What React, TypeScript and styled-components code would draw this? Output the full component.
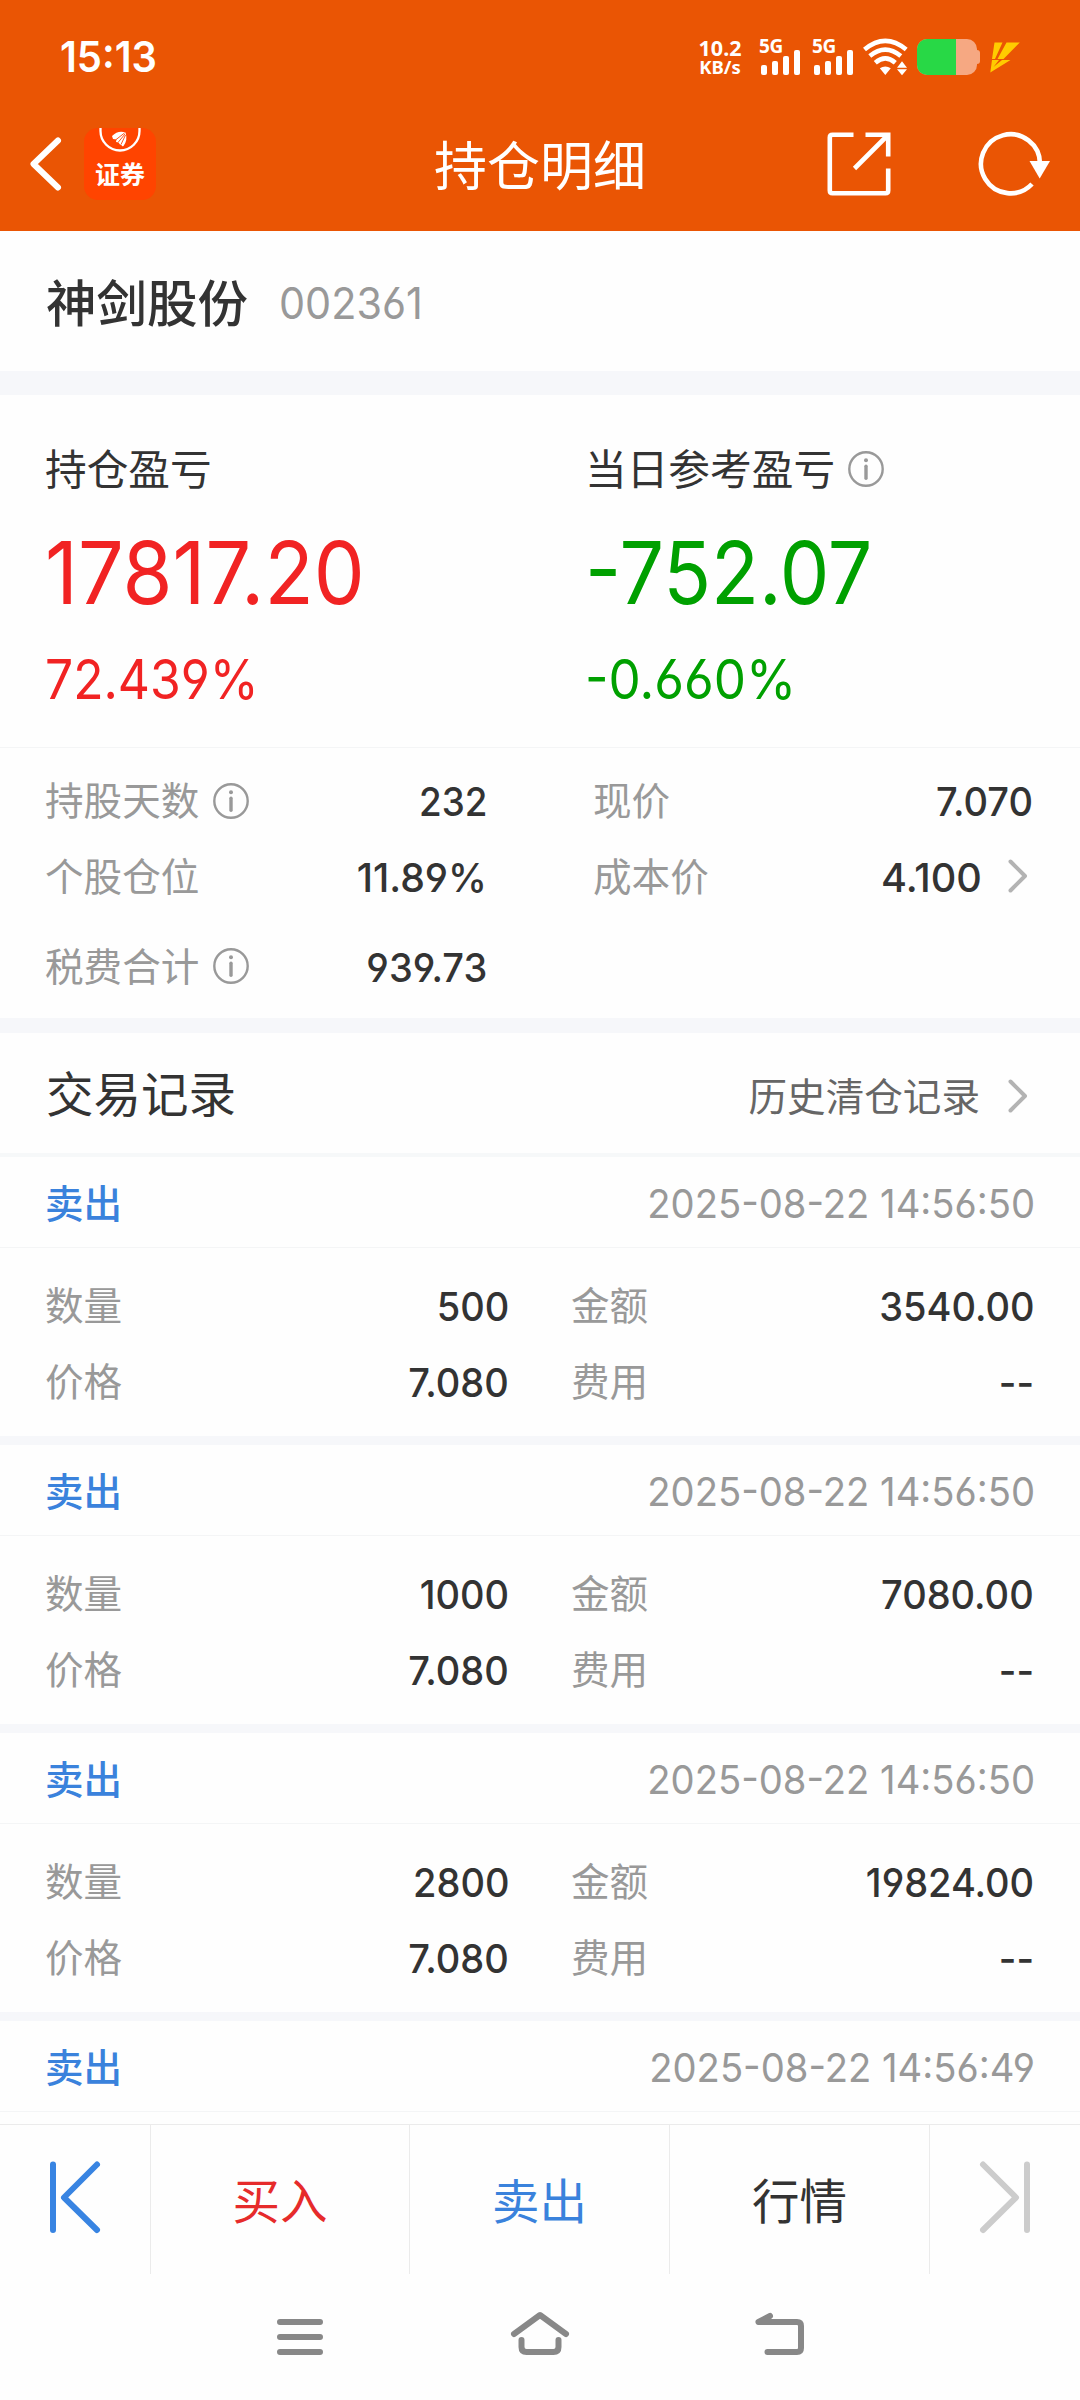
import React from 'react';
import styled, { createGlobalStyle } from 'styled-components';

const cjk = '"Noto Sans CJK SC", "Noto Sans", sans-serif';
const latin = 'Inter, "Noto Sans CJK SC", sans-serif';

const color = {
  brand: '#ea5504',
  text: '#333333',
  sub: '#666666',
  muted: '#999999',
  band: '#f6f7fa',
  rule: '#f4f5f6',
  red: '#f12323',
  green: '#00a000',
  blue: '#3a82dc',
};

const GlobalStyle = createGlobalStyle`
  * { box-sizing: border-box; }
  body { margin: 0; background: #fefefe; }
`;

const Screen = styled.div`
  display: flex;
  flex-direction: column;
  width: 1080px;
  height: 2400px;
  overflow: hidden;
  background: #fefefe;
  color: ${color.text};
  font-family: ${cjk};
`;

/* Latin digits, set slightly condensed from one edge */
const Num = styled.span<{ $size?: number; $weight?: number; $color?: string; $x?: number; $origin?: string }>`
  display: inline-block;
  font-family: ${latin};
  font-size: ${(p) => p.$size ?? 40}px;
  font-weight: ${(p) => p.$weight ?? 500};
  font-feature-settings: 'cv03', 'cv04';
  line-height: 1;
  white-space: nowrap;
  color: ${(p) => p.$color ?? color.text};
  transform: scaleX(${(p) => p.$x ?? 0.95});
  transform-origin: ${(p) => p.$origin ?? 'right'} center;
`;

const Han = styled.span<{ $size?: number; $weight?: number; $color?: string; $lift?: number }>`
  font-size: ${(p) => p.$size ?? 38.6}px;
  font-weight: ${(p) => p.$weight ?? 400};
  line-height: 1;
  padding-bottom: ${(p) => p.$lift ?? 0.17}em;
  color: ${(p) => p.$color ?? color.muted};
  white-space: nowrap;
`;

const Header = styled.header`
  height: 231px;
  flex: none;
  background: ${color.brand};
  color: #fff;
`;

const StatusBar = styled.div`
  display: flex;
  align-items: center;
  justify-content: space-between;
  height: 114px;
  padding: 0 60px 0 60px;
`;

const StatusIcons = styled.div`
  display: flex;
  align-items: center;
`;

const NetSpeed = styled.div`
  display: flex;
  flex-direction: column;
  align-items: center;
  width: 44px;
  margin-right: 17px;
  font-family: 'Noto Sans', sans-serif;
  font-weight: 700;
  font-size: 21.5px;
  line-height: 20px;
  small {
    font-size: 18.5px;
    line-height: 18px;
  }
`;

const Signal = styled.div`
  display: flex;
  flex-direction: column;
  width: 42px;
  height: 37px;
  margin-right: 11px;
`;

const SignalLabel = styled.span`
  height: 13px;
  font: 700 19px/14px 'Noto Sans', sans-serif;
  letter-spacing: -0.3px;
`;

const SignalBars = styled.div`
  display: flex;
  align-items: flex-end;
  gap: 5px;
  height: 25px;
  margin: -2px 0 0 2px;
`;

const Bar = styled.i<{ $h: number }>`
  width: 6px;
  height: ${(p) => p.$h}px;
  border-radius: 2px;
  background: #fff;
`;

const TitleBar = styled.div`
  display: grid;
  grid-template-columns: 1fr auto 1fr;
  align-items: center;
  height: 99px;
  padding: 0 29px 0 29px;
`;

const TitleLeft = styled.div`
  display: flex;
  align-items: center;
  gap: 21px;
`;

const TitleRight = styled.div`
  display: flex;
  align-items: center;
  justify-content: flex-end;
  gap: 86px;
`;

const Logo = styled.div`
  display: flex;
  flex-direction: column;
  align-items: center;
  width: 72px;
  height: 72px;
  border-radius: 14px;
  background: #ff4400;
`;

const LogoText = styled.span`
  font-size: 25px;
  font-weight: 700;
  line-height: 25px;
  margin-top: 6px;
`;

const StockRow = styled.section`
  display: flex;
  align-items: center;
  gap: 31px;
  height: 140px;
  flex: none;
  padding: 4px 46px 0;
`;

const Band = styled.div<{ $h: number }>`
  height: ${(p) => p.$h}px;
  flex: none;
  background: ${color.band};
`;

const Summary = styled.section`
  display: grid;
  grid-template-columns: 540px 540px;
  height: 353px;
  flex: none;
  padding-top: 49px;
  border-bottom: 1px solid ${color.rule};
`;

const SummaryCol = styled.div`
  display: flex;
  flex-direction: column;
  padding-left: 45px;
`;

const Line = styled.div<{ $h: number }>`
  display: flex;
  align-items: center;
  gap: 13px;
  height: ${(p) => p.$h}px;
  > svg {
    margin-bottom: 2px;
  }
`;

const Stats = styled.section`
  display: grid;
  grid-template-columns: 442px 440px;
  column-gap: 106px;
  grid-template-rows: 76px 75px 105px;
  height: 270px;
  flex: none;
  padding: 16px 46px 0 45px;
`;

const Stat = styled.div`
  display: flex;
  align-items: center;
  gap: 14px;
  > svg {
    margin-bottom: 3px;
  }
  > :last-child {
    margin-left: auto;
  }
`;

const StatValue = styled.span`
  display: flex;
  align-items: center;
  gap: 26px;
  padding-right: 5px;
  > svg {
    margin-bottom: 4px;
  }
`;

const TradeHeader = styled.section`
  display: flex;
  align-items: center;
  justify-content: space-between;
  height: 124px;
  flex: none;
  padding: 5px 52px 0 46px;
  border-bottom: 4px solid #f6f8f9;
`;

const TradeLink = styled.div`
  display: flex;
  align-items: center;
  gap: 28px;
`;

const Records = styled.section`
  flex: 1;
  min-height: 0;
  overflow: hidden;
`;

const RecordHead = styled.div`
  display: flex;
  align-items: center;
  justify-content: space-between;
  height: 91px;
  padding: 3px 45px 0;
  border-bottom: 1px solid ${color.rule};
`;

const RecordBody = styled.div`
  display: grid;
  grid-template-columns: 464px 463px;
  column-gap: 62px;
  grid-template-rows: 76px 76px;
  height: 188px;
  padding: 20.5px 45px 0;
`;

const TabBar = styled.nav`
  display: grid;
  grid-template-columns: 151px 259px 260px 260px 150px;
  height: 150px;
  flex: none;
  border-top: 1px solid #ebebeb;
`;

const Tab = styled.div`
  display: flex;
  align-items: center;
  justify-content: center;
  padding-top: 1px;
  &:not(:last-child) {
    border-right: 1px solid #ebebeb;
  }
`;

const NavBar = styled.footer`
  display: flex;
  justify-content: center;
  align-items: center;
  gap: 180px;
  height: 126px;
  flex: none;
`;

const InfoIcon = () => (
  <svg width="36" height="36" viewBox="0 0 36 36" fill="none" stroke={color.muted}>
    <circle cx="18" cy="18" r="16.7" strokeWidth="2.4" />
    <path d="M18 15.2v12" strokeWidth="3.4" strokeLinecap="round" />
    <circle cx="18" cy="9.3" r="2" fill={color.muted} stroke="none" />
  </svg>
);

const Chevron = () => (
  <svg width="20" height="34" viewBox="0 0 20 34" fill="none">
    <path d="M2.5 2.5 17 17 2.5 31.5" stroke="#b3b3b3" strokeWidth="4" strokeLinecap="round" strokeLinejoin="round" />
  </svg>
);

const SignalIcon = () => (
  <Signal>
    <SignalLabel>5G</SignalLabel>
    <SignalBars>
      {[10, 14, 19, 25].map((h) => (
        <Bar key={h} $h={h} />
      ))}
    </SignalBars>
  </Signal>
);

const WifiSvg = styled.svg`
  margin: 0 8px 0 -2px;
`;

const Wifi = () => (
  <WifiSvg width="46" height="38" viewBox="0 0 46 38" fill="none">
    <g stroke="#fff" strokeWidth="4.6">
      <path d="M1.5 11.5Q22.3-5.8 43.2 11.5" />
      <path d="M6.8 18Q22.3 5.2 37.8 18" />
      <path d="M12.3 24.8Q22.3 16 32.3 24.8" />
    </g>
    <path d="M16.8 30.3Q22.3 26.8 27.8 30.3L22.3 37ZM39 23.3l5 6.5H34ZM39 37.2l5-6H34Z" fill="#fff" />
  </WifiSvg>
);

const BatterySvg = styled.svg`
  margin-right: 9px;
`;

const Battery = () => (
  <BatterySvg width="64" height="36" viewBox="0 0 64 36">
    <rect x="0" y="0" width="60" height="36" rx="10" fill="#f6a882" />
    <path d="M60 11q3 0 3 3v8q0 3-3 3Z" fill="#f6a882" />
    <path d="M39 0H10A10 10 0 0 0 0 10v16a10 10 0 0 0 10 10h29Z" fill="#28d846" />
  </BatterySvg>
);

const Bolt = () => (
  <svg width="30" height="31" viewBox="0 0 30 31" fill="#ffcc00">
    <path d="M4.500 .5H12.500L5 17H2ZM16.500 .5H29.800L13.500 17H7.500ZM2 18H9L3.500 25 12 18H20.500L.3 30.500Z" />
  </svg>
);

interface Trade {
  qty: string;
  amount: string;
  time: string;
}

const trades: Trade[] = [
  { qty: '500', amount: '3540.00', time: '2025-08-22 14:56:50' },
  { qty: '1000', amount: '7080.00', time: '2025-08-22 14:56:50' },
  { qty: '2800', amount: '19824.00', time: '2025-08-22 14:56:50' },
];

const RecordTop = ({ time }: { time: string }) => (
  <RecordHead>
    <Han $color={color.blue} $weight={500} $lift={0.12}>卖出</Han>
    <Num $color={color.muted} $weight={400} $x={0.955}>{time}</Num>
  </RecordHead>
);

const Field = ({ label, value }: { label: string; value: string }) => (
  <Stat>
    <Han>{label}</Han>
    <Num>{value}</Num>
  </Stat>
);

export default function App() {
  return (
    <Screen>
      <GlobalStyle />
      <Header>
        <StatusBar>
          <Num $size={42} $weight={600} $color="#fff" $origin="left">15:13</Num>
          <StatusIcons>
            <NetSpeed>
              <span>10.2</span>
              <small>KB/s</small>
            </NetSpeed>
            <SignalIcon />
            <SignalIcon />
            <Wifi />
            <Battery />
            <Bolt />
          </StatusIcons>
        </StatusBar>
        <TitleBar>
          <TitleLeft>
            <svg width="34" height="56" viewBox="0 0 34 56" fill="none">
              <path d="M29 4.500 4.500 28 29 51.500" stroke="#fff" strokeWidth="6" strokeLinecap="round" strokeLinejoin="round" />
            </svg>
            <Logo>
              <svg width="44" height="27" viewBox="0 0 44 27">
                <path d="M2.5 0v3a19.5 19.5 0 0 0 39 0V0" stroke="#fff" strokeWidth="2.3" fill="none" />
                <path d="M14 8Q20 2 27.500 4.500Q30 12 25.500 18Q24 19 23.500 17L22 16.500 20.500 14.500 18 14 18.500 11.500 15 11Z" fill="#fff" />
                <path d="M26.500 5 17.500 12M27 6 20 14.500M27.500 7 23 16.500" stroke="#ff4400" strokeWidth=".9" />
              </svg>
              <LogoText>证券</LogoText>
            </Logo>
          </TitleLeft>
          <Han $size={53} $color="#fff" $lift={0.01}>持仓明细</Han>
          <TitleRight>
            <svg width="64" height="64" viewBox="0 0 64 64" fill="none" stroke="#fff" strokeWidth="4.6">
              <path d="M26.500 2.800H5.500Q2.800 2.800 2.800 5.500V58.500Q2.800 61.200 5.500 61.200H58.500Q61.200 61.200 61.200 58.500V36.500" />
              <path d="M38.500 2.800H61.200V24.500M61 3 27.500 36.500" />
            </svg>
            <svg width="74" height="66" viewBox="0 0 74 66" fill="none">
              <path d="M63 33A29.500 29.500 0 1 0 55 53" stroke="#fff" strokeWidth="4.600" />
              <path d="M52.500 30H73L62.700 47.500Z" fill="#fff" />
            </svg>
          </TitleRight>
        </TitleBar>
      </Header>

      <StockRow>
        <Han $size={50.500} $weight={500} $color={color.text} $lift={0.11}>神剑股份</Han>
        <Num $size={44} $weight={400} $color={color.muted} $x={0.94} $origin="left">002361</Num>
      </StockRow>
      <Band $h={24} />

      <Summary>
        <SummaryCol>
          <Line $h={52}>
            <Han $size={41.700} $color={color.text} $lift={0.08}>持仓盈亏</Han>
          </Line>
          <Line $h={154}>
            <Num $size={86.500} $weight={400} $color={color.red} $x={0.935} $origin="left">17817.20</Num>
          </Line>
          <Line $h={58}>
            <Num $size={55} $weight={400} $color={color.red} $x={0.905} $origin="left">72.439%</Num>
          </Line>
        </SummaryCol>
        <SummaryCol>
          <Line $h={52}>
            <Han $size={41.700} $color={color.text} $lift={0.08}>当日参考盈亏</Han>
            <InfoIcon />
          </Line>
          <Line $h={154}>
            <Num $size={86.500} $weight={400} $color={color.green} $x={0.91} $origin="left">-752.07</Num>
          </Line>
          <Line $h={58}>
            <Num $size={55} $weight={400} $color={color.green} $x={0.93} $origin="left">-0.660%</Num>
          </Line>
        </SummaryCol>
      </Summary>

      <Stats>
        <Stat>
          <Han>持股天数</Han>
          <InfoIcon />
          <Num $x={0.92}>232</Num>
        </Stat>
        <Field label="现价" value="7.070" />
        <Stat>
          <Han>个股仓位</Han>
          <Num $x={0.98}>11.89%</Num>
        </Stat>
        <Stat>
          <Han>成本价</Han>
          <StatValue>
            <Num $x={0.99}>4.100</Num>
            <Chevron />
          </StatValue>
        </Stat>
        <Stat>
          <Han>税费合计</Han>
          <InfoIcon />
          <Num>939.73</Num>
        </Stat>
      </Stats>
      <Band $h={15} />

      <TradeHeader>
        <Han $size={47.500} $color={color.text} $lift={0.14}>交易记录</Han>
        <TradeLink>
          <Han $color={color.sub} $lift={0.06}>历史清仓记录</Han>
          <Chevron />
        </TradeLink>
      </TradeHeader>

      <Records>
        {trades.map((t) => (
          <React.Fragment key={t.amount}>
            <RecordTop time={t.time} />
            <RecordBody>
              <Field label="数量" value={t.qty} />
              <Field label="金额" value={t.amount} />
              <Field label="价格" value="7.080" />
              <Field label="费用" value="--" />
            </RecordBody>
            <Band $h={9} />
          </React.Fragment>
        ))}
        <RecordTop time="2025-08-22 14:56:49" />
      </Records>

      <TabBar>
        <Tab>
          <svg width="56" height="80" viewBox="0 0 56 80" fill="none" stroke="#3884e2" strokeWidth="6" strokeLinecap="round" strokeLinejoin="round">
            <path d="M6 4.500V70M50 4.500 17 37.500 50 70" />
          </svg>
        </Tab>
        <Tab><Han $size={47.500} $color="#e62b2b" $lift={0.06}>买入</Han></Tab>
        <Tab><Han $size={47.500} $color={color.blue} $lift={0.06}>卖出</Han></Tab>
        <Tab><Han $size={47.500} $color={color.text} $lift={0.06}>行情</Han></Tab>
        <Tab>
          <svg width="56" height="80" viewBox="0 0 56 80" fill="none" stroke="#cccccc" strokeWidth="6" strokeLinecap="round" strokeLinejoin="round">
            <path d="M50 4.500V70M6 4.500 39 37.500 6 70" />
          </svg>
        </Tab>
      </TabBar>

      <NavBar>
        {[
          'M10 15H50M10 30H50M10 45H50',
          'M4 27 30 8 56 27M11.500 33V40Q11.500 45 16.500 45H43.500Q48.500 45 48.500 40V33',
          'M20 9 8.500 15H47Q51 15 51 19V41Q51 45 47 45H17.500',
        ].map((d) => (
          <svg key={d} width="60" height="60" viewBox="0 0 60 60" fill="none" stroke="#888888" strokeWidth="6" strokeLinecap="round" strokeLinejoin="round">
            <path d={d} />
          </svg>
        ))}
      </NavBar>
    </Screen>
  );
}
